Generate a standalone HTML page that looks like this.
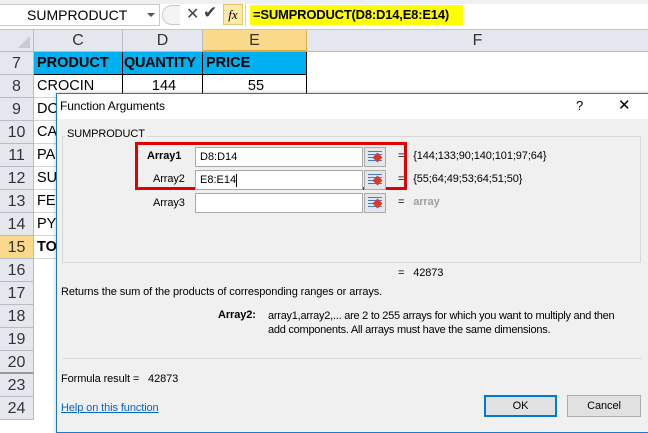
<!DOCTYPE html>
<html><head><meta charset="utf-8"><style>
*{margin:0;padding:0;box-sizing:border-box}
body{width:648px;height:421px;overflow:hidden;background:#fff;font-family:"Liberation Sans",sans-serif;position:relative}
.a{position:absolute}
.rh{position:absolute;left:0;width:34px;height:23px;background:#e4e8ee;border-bottom:1px solid #b7bcc4;border-right:1px solid #b7bcc4;color:#333;font-size:16px;text-align:center;line-height:23px}
.cell{position:absolute;height:23px;border-right:1px solid #d4d4d4;border-bottom:1px solid #d4d4d4;font-size:14.5px;line-height:23px;padding-left:3px;color:#000;white-space:nowrap;overflow:hidden}
.d{font-family:"Liberation Sans",sans-serif;font-size:11px;color:#000;white-space:nowrap;letter-spacing:-0.1px}
.inp{position:absolute;left:195px;width:168px;height:20px;background:#fff;border:1px solid #a9a9a9;font-size:11px;line-height:18px;padding-left:4px}
.ib{position:absolute;left:364px;width:22px;height:20px;background:#e6e6e6;border:1px solid #a9a9a9}
.ib::after{content:"";position:absolute;left:3px;top:3px;width:14px;height:12px;background:repeating-linear-gradient(#4a7bc0 0 1px,#dde7f5 1px 3px);}
.ib::before{content:"";position:absolute;left:9px;top:6px;width:7px;height:7px;background:#d83a2a;transform:rotate(45deg);z-index:2}
</style></head><body>
<div class="a" style="left:0;top:0;width:648px;height:30px;background:#fff;border-bottom:1px solid #c6c6c6"></div>
<div class="a" style="left:0;top:0;width:648px;height:4px;background:#eef0f3"></div>
<div class="a" style="left:0;top:4px;width:160px;height:22px;border:1px solid #c9c9c9;border-left:none;font-size:14px;line-height:20px;padding-left:27px">SUMPRODUCT</div>
<div class="a" style="left:147px;top:13px;width:0;height:0;border-left:4px solid transparent;border-right:4px solid transparent;border-top:4px solid #555"></div>
<div class="a" style="left:162px;top:5px;width:18px;height:20px;border-radius:10px 0 0 10px;border:1px solid #c8c8c8;border-right:none;background:#f4f4f4"></div>
<div class="a" style="left:186px;top:4px;font-size:16px;color:#444">✕</div>
<div class="a" style="left:203px;top:3px;font-size:17px;color:#444">✔</div>
<div class="a" style="left:223px;top:4px;width:20px;height:21px;background:#fde9a8;border:1px solid #e6c46a;font-family:'Liberation Serif',serif;font-style:italic;font-size:13px;text-align:center;line-height:19px">fx</div>
<div class="a" style="left:245px;top:4px;width:1px;height:22px;background:#ccc"></div>
<div class="a" style="left:250px;top:5px;width:213px;height:20px;background:#ffff00;font-weight:bold;font-size:13px;line-height:20px;padding-left:3px;white-space:nowrap;letter-spacing:-0.2px">=SUMPRODUCT(D8:D14,E8:E14)</div>
<div class="a" style="left:0;top:30px;width:648px;height:22px;background:#e4e8ee;border-bottom:1px solid #b7bcc4"></div>
<div class="a" style="left:0;top:30px;width:34px;height:22px;border-right:1px solid #b7bcc4"></div>
<div class="a" style="left:18px;top:36px;width:0;height:0;border-left:12px solid transparent;border-bottom:12px solid #c8ccd2"></div>
<div class="a" style="left:34px;top:30px;width:89px;height:22px;border-right:1px solid #b7bcc4;text-align:center;font-size:16px;line-height:22px;color:#333">C</div>
<div class="a" style="left:123px;top:30px;width:80px;height:22px;border-right:1px solid #b7bcc4;text-align:center;font-size:16px;line-height:22px;color:#333">D</div>
<div class="a" style="left:203px;top:30px;width:104px;height:22px;background:#fad98a;border-right:1px solid #e0b050;border-bottom:2px solid #e0a93c;text-align:center;font-size:16px;line-height:22px;color:#333">E</div>
<div class="a" style="left:307px;top:30px;width:341px;height:22px;text-align:center;font-size:16px;line-height:22px;color:#333">F</div>
<div class="rh" style="top:52px">7</div><div class="rh" style="top:75px">8</div><div class="rh" style="top:98px">9</div><div class="rh" style="top:121px">10</div><div class="rh" style="top:144px">11</div><div class="rh" style="top:167px">12</div><div class="rh" style="top:190px">13</div><div class="rh" style="top:213px">14</div>
<div class="rh" style="top:236px;background:#fad98a">15</div>
<div class="rh" style="top:259px">16</div><div class="rh" style="top:282px">17</div><div class="rh" style="top:305px">18</div><div class="rh" style="top:328px">19</div><div class="rh" style="top:351px;border-bottom:2px solid #999">20</div><div class="rh" style="top:374px">23</div><div class="rh" style="top:397px">24</div>
<div class="cell" style="left:34px;top:52px;width:89px;background:#00b0f0;font-weight:bold;border-right:1px solid #000;border-bottom:1px solid #000">PRODUCT</div>
<div class="cell" style="left:123px;top:52px;width:80px;background:#00b0f0;font-weight:bold;border-right:1px solid #000;border-bottom:1px solid #000;padding-left:1px;letter-spacing:-0.3px">QUANTITY</div>
<div class="cell" style="left:203px;top:52px;width:104px;background:#00b0f0;font-weight:bold;border-right:1px solid #000;border-bottom:1px solid #000">PRICE</div>
<div class="cell" style="left:34px;top:75px;width:89px;border-right:1px solid #000">CROCIN</div>
<div class="cell" style="left:123px;top:75px;width:80px;text-align:center;border-right:1px solid #000">144</div>
<div class="cell" style="left:203px;top:75px;width:104px;text-align:center;border-right:1px solid #000">55</div>
<div class="cell" style="left:34px;top:98px;width:30px">DO</div>
<div class="cell" style="left:34px;top:121px;width:30px">CA</div>
<div class="cell" style="left:34px;top:144px;width:30px">PA</div>
<div class="cell" style="left:34px;top:167px;width:30px">SU</div>
<div class="cell" style="left:34px;top:190px;width:30px">FE</div>
<div class="cell" style="left:34px;top:213px;width:30px">PY</div>
<div class="cell" style="left:34px;top:236px;width:30px;font-weight:bold">TO</div>
<div class="a" style="left:56px;top:93px;width:600px;height:340px;background:#f0f0f0;border:1px solid #1979ca;box-shadow:0 0 4px rgba(0,0,0,.25)"></div>
<div class="a" style="left:57px;top:94px;width:591px;height:25px;background:#fff"></div>
<div class="a d" style="left:60px;top:99px;font-size:12px">Function Arguments</div>
<div class="a d" style="left:576px;top:98px;font-size:13px">?</div>
<div class="a d" style="left:618px;top:96px;font-size:15px">✕</div>
<div class="a" style="left:62px;top:136px;width:579px;height:127px;border:1px solid #d8d8d8"></div>
<div class="a d" style="left:65px;top:128px;background:#f0f0f0;padding:0 2px">SUMPRODUCT</div>
<div class="a" style="left:135px;top:142px;width:272px;height:48px;border:3px solid #e00000"></div>
<div class="a d" style="left:147px;top:150px;font-weight:bold">Array1</div>
<div class="a d" style="left:153px;top:173px">Array2</div>
<div class="a d" style="left:153px;top:197px">Array3</div>
<div class="inp" style="top:147px">D8:D14</div><div class="ib" style="top:147px"></div>
<div class="inp" style="top:170px">E8:E14<span style="display:inline-block;width:1px;height:13px;background:#000;vertical-align:middle"></span></div><div class="ib" style="top:170px"></div>
<div class="inp" style="top:193px"></div><div class="ib" style="top:193px"></div>
<div class="a d" style="left:398px;top:150px">=&nbsp;&nbsp; {144;133;90;140;101;97;64}</div>
<div class="a d" style="left:398px;top:173px">=&nbsp;&nbsp; {55;64;49;53;64;51;50}</div>
<div class="a d" style="left:398px;top:196px">=&nbsp;&nbsp; <b style="color:#a0a0a0">array</b></div>
<div class="a d" style="left:398px;top:267px">=&nbsp;&nbsp; 42873</div>
<div class="a d" style="left:61px;top:286px">Returns the sum of the products of corresponding ranges or arrays.</div>
<div class="a d" style="left:218px;top:309px;font-weight:bold">Array2:</div>
<div class="a d" style="left:268px;top:309px;line-height:14px;letter-spacing:-0.25px">array1,array2,... are 2 to 255 arrays for which you want to multiply and then<br>add components. All arrays must have the same dimensions.</div>
<div class="a" style="left:62px;top:358px;width:580px;height:1px;background:#dcdcdc"></div>
<div class="a d" style="left:61px;top:373px">Formula result =&nbsp;&nbsp; 42873</div>
<div class="a d" style="left:61px;top:402px;color:#0066cc;text-decoration:underline">Help on this function</div>
<div class="a d" style="left:484px;top:395px;width:73px;height:22px;background:#e1e1e1;border:2px solid #0078d7;text-align:center;line-height:18px">OK</div>
<div class="a d" style="left:567px;top:395px;width:74px;height:22px;background:#e1e1e1;border:1px solid #adadad;text-align:center;line-height:20px">Cancel</div>
</body></html>
